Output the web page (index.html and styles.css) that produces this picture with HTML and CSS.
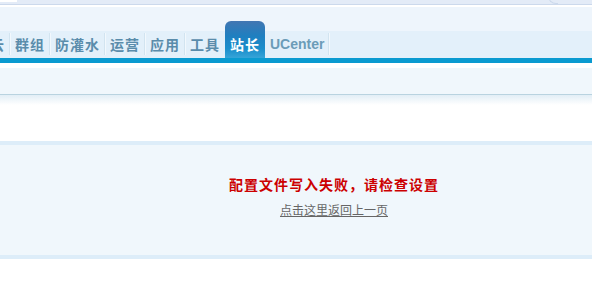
FILE: index.html
```html
<!DOCTYPE html>
<html lang="zh-CN">
<head>
    <meta charset="UTF-8">
    <title>提示信息</title>
    <link rel="stylesheet" href="styles.css">
</head>
<body>
    <div class="topbar">
        <span class="topbar-tab"></span>
        <span class="topbar-corner"></span>
    </div>
    <div class="header">
        <ul class="nav">
            <li class="nav-item">云</li>
            <li class="nav-item">群组</li>
            <li class="nav-item">防灌水</li>
            <li class="nav-item">运营</li>
            <li class="nav-item">应用</li>
            <li class="nav-item nav-item-plain">工具</li>
            <li class="nav-item nav-item-active">站长</li>
            <li class="nav-item nav-item-latin">UCenter</li>
        </ul>
    </div>
    <div class="nav-line"></div>
    <div class="subnav"></div>
    <div class="subnav-shadow"></div>

    <div class="main">
        <div class="msg-box">
            <p class="msg-title">配置文件写入失败，请检查设置</p>
            <a class="msg-link" href="javascript:history.back()">点击这里返回上一页</a>
        </div>
    </div>
</body>
</html>
```

FILE: styles.css
```css
* {
    box-sizing: border-box;
    margin: 0;
    padding: 0;
}

body {
    font-family: "Liberation Sans", "Noto Sans CJK SC", sans-serif;
    font-size: 12px;
    background: #fff;
    overflow: hidden;
}

.topbar {
    height: 5px;
    background: #e3ebf7;
    border-bottom: 1px solid #ccd9ec;
    position: relative;
}

.topbar-tab {
    position: absolute;
    left: 0;
    top: 0;
    width: 17px;
    height: 2px;
    background: #fff;
}

.topbar-corner {
    position: absolute;
    left: 548px;
    top: -4px;
    width: 10px;
    height: 8px;
    border-left: 1px solid #ccd9ec;
    border-bottom: 1px solid #ccd9ec;
    border-bottom-left-radius: 8px;
}

.header {
    background: #eef5fc;
    border-top: 2px solid #fff;
    padding-top: 24px;
}

.nav {
    list-style: none;
    display: flex;
    height: 27px;
    background: #e3f0fa;
    margin-left: -15px;
}

.nav-item {
    font-family: "Noto Sans CJK SC", "Liberation Sans", sans-serif;
    font-size: 14px;
    font-weight: bold;
    letter-spacing: 1px;
    color: #5a8cab;
    line-height: 27px;
    padding: 0 5px;
    position: relative;
}

.nav-item:after {
    content: "";
    position: absolute;
    right: 0;
    top: 2px;
    width: 1px;
    height: 22px;
    background: #d2e4f0;
    box-shadow: 1px 0 0 #f2f8fd;
}

.nav-item-plain:after,
.nav-item-active:after {
    display: none;
}

.nav-item-active {
    color: #fff;
    height: 37px;
    margin-top: -10px;
    padding: 10px 5px 0 5px;
    border-radius: 6px 6px 0 0;
    background: linear-gradient(#4276b2, #1f7fc0 40%, #1a8ecb 75%, #36a4d8);
}

.nav-item-latin {
    font-family: "Liberation Sans", sans-serif;
    letter-spacing: 0;
    color: #6b9cb8;
}

.nav-line {
    height: 5px;
    background: #0a9ad0;
}

.subnav {
    height: 32px;
    background: #f0f7fc;
    border-top: 5px solid #fff;
    border-bottom: 1px solid #b9d3e0;
}

.subnav-shadow {
    height: 10px;
    background: linear-gradient(#e2eef6, #fff);
}

.main {
    padding-top: 36px;
}

.msg-box {
    height: 118px;
    background: #f0f7fc;
    border-top: 4px solid #ddedf9;
    border-bottom: 4px solid #ddedf9;
    padding: 29px 0 0 76px;
    text-align: center;
}

.msg-title {
    font-family: "Noto Sans CJK SC", sans-serif;
    font-size: 14px;
    font-weight: bold;
    letter-spacing: 1px;
    line-height: 20px;
    color: #cc0000;
    margin-bottom: 8px;
}

.msg-link {
    font-family: "Noto Sans CJK SC", sans-serif;
    font-size: 12px;
    line-height: 16px;
    color: #666;
    text-decoration: underline;
}
```
